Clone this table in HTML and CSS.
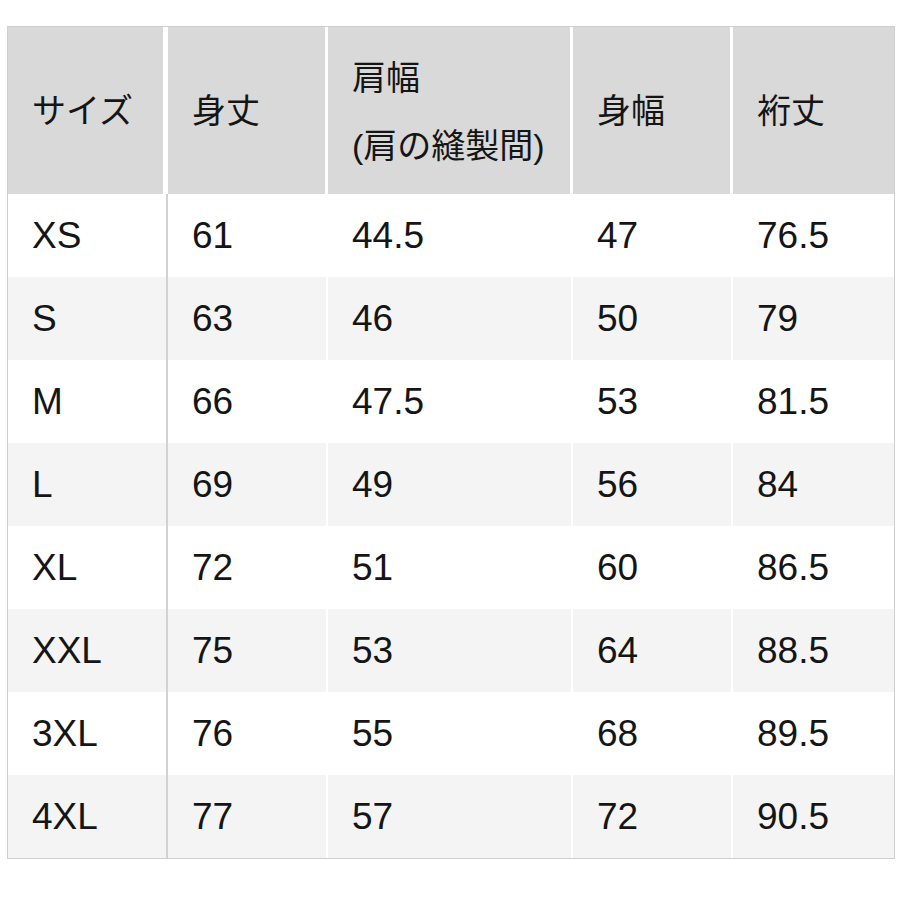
FILE: index.html
```html
<!DOCTYPE html>
<html lang="ja">
<head>
<meta charset="utf-8">
<title>サイズ表</title>
<link rel="stylesheet" href="styles.css">
</head>
<body>
<div class="table">
  <div class="row head">
    <div class="cell">サイズ</div>
    <div class="cell">身丈</div>
    <div class="cell two">肩幅<br>(肩の縫製間)</div>
    <div class="cell">身幅</div>
    <div class="cell">裄丈</div>
  </div>
  <div class="row"><div class="cell">XS</div><div class="cell">61</div><div class="cell">44.5</div><div class="cell">47</div><div class="cell">76.5</div></div>
  <div class="row alt"><div class="cell">S</div><div class="cell">63</div><div class="cell">46</div><div class="cell">50</div><div class="cell">79</div></div>
  <div class="row"><div class="cell">M</div><div class="cell">66</div><div class="cell">47.5</div><div class="cell">53</div><div class="cell">81.5</div></div>
  <div class="row alt"><div class="cell">L</div><div class="cell">69</div><div class="cell">49</div><div class="cell">56</div><div class="cell">84</div></div>
  <div class="row"><div class="cell">XL</div><div class="cell">72</div><div class="cell">51</div><div class="cell">60</div><div class="cell">86.5</div></div>
  <div class="row alt"><div class="cell">XXL</div><div class="cell">75</div><div class="cell">53</div><div class="cell">64</div><div class="cell">88.5</div></div>
  <div class="row"><div class="cell">3XL</div><div class="cell">76</div><div class="cell">55</div><div class="cell">68</div><div class="cell">89.5</div></div>
  <div class="row alt"><div class="cell">4XL</div><div class="cell">77</div><div class="cell">57</div><div class="cell">72</div><div class="cell">90.5</div></div>
</div>
</body>
</html>
```

FILE: styles.css
```css
html, body {
  margin: 0;
  padding: 0;
  background: #ffffff;
}

body {
  font-family: "Liberation Sans", "Noto Sans CJK JP", sans-serif;
  color: #151515;
}

.table {
  box-sizing: border-box;
  width: 888px;
  margin: 26px 0 0 7px;
  border: 1px solid #cfcfcf;
  display: flex;
  flex-direction: column;
}

.row {
  display: grid;
  grid-template-columns: 160px 160px 245px 160px 161px;
  height: 83px;
  background: #ffffff;
}

.row.alt {
  background: #f4f4f4;
}

.cell {
  box-sizing: border-box;
  display: flex;
  align-items: center;
  padding-left: 24px;
  font-size: 37px;
  border-right: 2px solid #ffffff;
  white-space: nowrap;
}

.row .cell:first-child {
  border-right-color: #d2d2d2;
}

.row .cell:last-child {
  border-right: none;
}

.row.head {
  height: 167px;
  background: #ffffff;
}

.row.head .cell {
  background: #d9d9d9;
  font-size: 34px;
  border-right: 3px solid #ffffff;
  line-height: 68px;
}

.row.head .cell:first-child {
  border-right: 5px solid #ffffff;
}

.row.head .cell:last-child {
  border-right: none;
}

.row.head .cell.two {
  padding-top: 2px;
}
```
